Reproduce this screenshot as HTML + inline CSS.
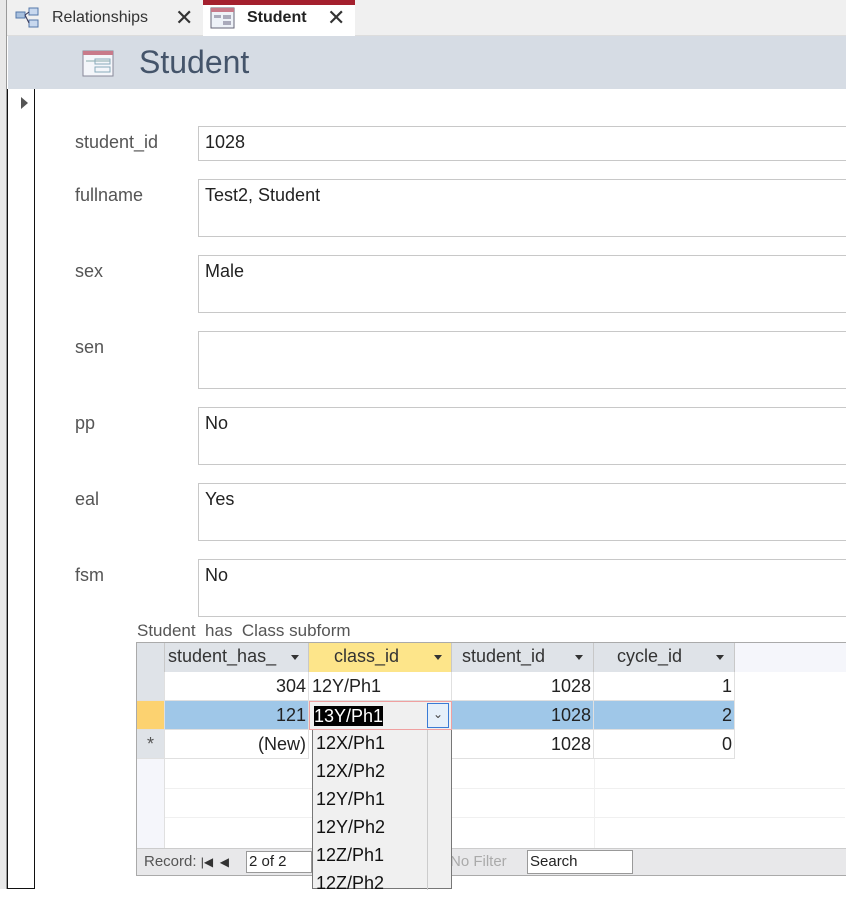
<!DOCTYPE html>
<html><head><style>
*{margin:0;padding:0;box-sizing:border-box}
body{width:846px;height:889px;overflow:hidden;background:#fff;font-family:"Liberation Sans",sans-serif;position:relative;color:#222}
.a{position:absolute}
.lbl{position:absolute;left:75px;font-size:18px;color:#555}
.box{position:absolute;left:198px;width:660px;border:1px solid #c8c8c8;font-size:18px;padding:5px 6px;color:#222}
.h{position:absolute;top:643px;height:29px;background:#dfe3e8;font-size:18px;color:#333;padding-top:3px;border-right:1px solid #c8c8c8}
.c{position:absolute;height:29px;font-size:18px;padding-top:4px;border-right:1px solid #e0e0e0;border-bottom:1px solid #e0e0e0}
.r{text-align:right;padding-right:2px}
.tri{position:absolute;top:12px;width:0;height:0;border-left:4px solid transparent;border-right:4px solid transparent;border-top:5px solid #333}
.li{height:28px;font-size:18px;padding:3px 0 0 3px;color:#111}
</style></head><body>
<div class="a" style="left:0;top:0;width:846px;height:36px;background:#f0f0f0;border-bottom:1px solid #ddd"></div>
<div class="a" style="left:0;top:0;width:7px;height:889px;background:#e8e8e8;border-right:1px solid #999"></div>
<svg class="a" style="left:15px;top:6px" width="26" height="24"><rect x="1" y="6" width="9" height="6" fill="#a8c0de" stroke="#5577aa"/><rect x="14" y="2" width="9" height="7" fill="#c8d8ee" stroke="#5577aa"/><rect x="14" y="14" width="9" height="7" fill="#c8d8ee" stroke="#5577aa"/><path d="M10 9 L14 6 M10 9 L14 17" stroke="#335" fill="none"/></svg>
<div class="a" style="left:52px;top:9px;font-size:16px;color:#333">Relationships</div>
<div class="a" style="left:175px;top:5px;font-size:22px;color:#333">✕</div>
<div class="a" style="left:203px;top:0;width:152px;height:36px;background:#fff;border-top:5px solid #a4202e"></div>
<svg class="a" style="left:210px;top:7px" width="26" height="22"><rect x="1" y="1" width="23" height="20" fill="#eef2f8" stroke="#667"/><rect x="1" y="1" width="23" height="4" fill="#c87a8a"/><rect x="4" y="8" width="7" height="3" fill="#aab"/><rect x="13" y="8" width="8" height="4" fill="#aab"/><rect x="13" y="14" width="8" height="4" fill="#aab"/></svg>
<div class="a" style="left:247px;top:9px;font-size:16px;font-weight:bold;color:#222">Student</div>
<div class="a" style="left:327px;top:5px;font-size:22px;color:#333">✕</div>
<div class="a" style="left:8px;top:36px;width:838px;height:53px;background:#d6dce4"></div>
<svg class="a" style="left:82px;top:50px" width="32" height="28"><rect x="1" y="1" width="30" height="25" fill="#f4f6fa" stroke="#889"/><rect x="1" y="1" width="30" height="4" fill="#c87a8a"/><line x1="4" y1="11" x2="28" y2="11" stroke="#8aa"/><rect x="13" y="9" width="15" height="5" fill="none" stroke="#8ab"/><rect x="13" y="17" width="15" height="5" fill="none" stroke="#8ab"/></svg>
<div class="a" style="left:139px;top:44px;font-size:32px;color:#44546a">Student</div>
<div class="a" style="left:7px;top:89px;width:28px;height:800px;border:1px solid #111;border-top:none;background:#fff"></div>
<div class="a" style="left:21px;top:97px;border-top:6px solid transparent;border-bottom:6px solid transparent;border-left:7px solid #555"></div>

<div class="lbl" style="top:132px">student_id</div><div class="box" style="top:126px;height:35px">1028</div>
<div class="lbl" style="top:185px">fullname</div><div class="box" style="top:179px;height:58px">Test2, Student</div>
<div class="lbl" style="top:261px">sex</div><div class="box" style="top:255px;height:58px">Male</div>
<div class="lbl" style="top:337px">sen</div><div class="box" style="top:331px;height:58px"></div>
<div class="lbl" style="top:413px">pp</div><div class="box" style="top:407px;height:58px">No</div>
<div class="lbl" style="top:489px">eal</div><div class="box" style="top:483px;height:58px">Yes</div>
<div class="lbl" style="top:565px">fsm</div><div class="box" style="top:559px;height:58px">No</div>

<div class="a" style="left:137px;top:621px;font-size:17px;color:#555">Student&nbsp; has&nbsp; Class subform</div>
<div class="a" style="left:136px;top:642px;width:720px;height:234px;border:1px solid #aaa;background:#fff"></div>
<div class="a" style="left:735px;top:643px;width:111px;height:29px;background:#f5f6fb"></div>
<div class="h" style="left:137px;width:28px"></div>
<div class="h" style="left:165px;width:144px;padding-left:3px">student_has_<span class="tri" style="left:126px"></span></div>
<div class="h" style="left:309px;width:143px;background:#fde58a;padding-left:25px">class_id<span class="tri" style="left:125px"></span></div>
<div class="h" style="left:452px;width:142px;padding-left:10px">student_id<span class="tri" style="left:123px"></span></div>
<div class="h" style="left:594px;width:141px;padding-left:23px">cycle_id<span class="tri" style="left:122px"></span></div>

<div class="c" style="left:137px;top:672px;width:28px;background:#dfe3e8"></div>
<div class="c r" style="left:165px;top:672px;width:144px">304</div>
<div class="c" style="left:309px;top:672px;width:143px;padding-left:3px">12Y/Ph1</div>
<div class="c r" style="left:452px;top:672px;width:142px">1028</div>
<div class="c r" style="left:594px;top:672px;width:141px">1</div>

<div class="c" style="left:137px;top:701px;width:28px;background:#fcd270"></div>
<div class="c r" style="left:165px;top:701px;width:144px;background:#9fc7e8">121</div>
<div class="c" style="left:309px;top:701px;width:143px;background:#f0f0f0;border:1px solid #f0a0a0;padding-left:4px"><span style="background:#000;color:#fff">13Y/Ph1</span></div>
<div class="a" style="left:427px;top:703px;width:22px;height:25px;border:1px solid #3a7bd5;background:#e6f0fa;font-size:12px;text-align:center;line-height:20px;color:#444">&#8964;</div>
<div class="c r" style="left:452px;top:701px;width:142px;background:#9fc7e8">1028</div>
<div class="c r" style="left:594px;top:701px;width:141px;background:#9fc7e8">2</div>

<div class="c" style="left:137px;top:730px;width:28px;background:#dfe3e8;text-align:center;color:#555">*</div>
<div class="c r" style="left:165px;top:730px;width:144px">(New)</div>
<div class="c r" style="left:452px;top:730px;width:142px">1028</div>
<div class="c r" style="left:594px;top:730px;width:141px">0</div>
<div class="a" style="left:137px;top:759px;width:28px;height:89px;background:#f5f6fb;border-right:1px solid #e0e0e0"></div>
<div class="a" style="left:165px;top:788px;width:680px;height:1px;background:#f0f0f0"></div>
<div class="a" style="left:165px;top:817px;width:680px;height:1px;background:#f0f0f0"></div>
<div class="a" style="left:594px;top:759px;width:1px;height:89px;background:#f0f0f0"></div>

<div class="a" style="left:137px;top:848px;width:709px;height:27px;background:#e8e8ea;border-top:1px solid #ccc"></div>
<div class="a" style="left:144px;top:853px;font-size:15px;color:#555">Record: <span style="font-size:12px;color:#333">|◀ &nbsp;◀</span></div>
<div class="a" style="left:246px;top:851px;width:66px;height:22px;background:#fff;border:1px solid #999;font-size:15px;padding:1px 2px">2 of 2</div>
<div class="a" style="left:450px;top:853px;font-size:15px;color:#aaa">No Filter</div>
<div class="a" style="left:527px;top:850px;width:106px;height:24px;background:#fff;border:1px solid #999;font-size:15px;padding:2px 2px">Search</div>

<div class="a" style="left:312px;top:730px;width:140px;height:159px;background:#f0f0f0;border:1px solid #777;border-top:none">
<div class="a" style="left:114px;top:0;width:1px;height:160px;background:#ccc"></div>
<div class="li">12X/Ph1</div><div class="li">12X/Ph2</div><div class="li">12Y/Ph1</div><div class="li">12Y/Ph2</div><div class="li">12Z/Ph1</div><div class="li">12Z/Ph2</div>
</div>
</body></html>
